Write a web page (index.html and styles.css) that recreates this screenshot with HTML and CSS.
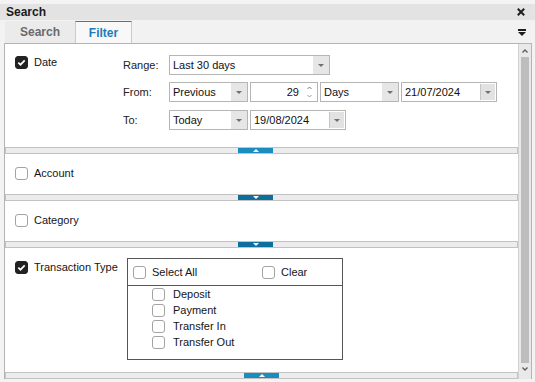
FILE: index.html
```html
<!DOCTYPE html>
<html>
<head>
<meta charset="utf-8">
<link rel="stylesheet" href="styles.css">
</head>
<body>
<div class="titlebar">
  <span class="title">Search</span>
  <svg class="close" viewBox="0 0 8 8"><path d="M0.8 0.8 L7.2 7.2 M7.2 0.8 L0.8 7.2" stroke="#1e1e1e" stroke-width="2" fill="none"/></svg>
</div>
<div class="tabstrip">
  <div class="tab tab-search">Search</div>
  <div class="tab tab-filter">Filter</div>
  <div class="tab-space"></div>
  <svg class="menu" viewBox="0 0 8 7"><rect x="0" y="0" width="8" height="2" fill="#1e1e1e"/><path d="M0 3 L8 3 L4 7 Z" fill="#1e1e1e"/></svg>
</div>
<div class="frame">
  <div class="sections">
    <section class="sec sec-date">
      <div class="lead lead-date">
        <span class="cb checked"><svg viewBox="0 0 13 13"><path d="M3.3 6.6 L5.5 8.7 L9.7 4.3" stroke="#fff" stroke-width="1.7" fill="none"/></svg></span>
        <span class="lead-text">Date</span>
      </div>
      <div class="date-grid">
        <div class="row">
          <span class="lbl">Range:</span>
          <div class="combo w161"><span class="combo-text">Last 30 days</span><span class="combo-btn"><i class="tri"></i></span></div>
        </div>
        <div class="row r2">
          <span class="lbl">From:</span>
          <div class="combo w79"><span class="combo-text">Previous</span><span class="combo-btn"><i class="tri"></i></span></div>
          <div class="spin"><span class="spin-text">29</span><span class="spin-btns"><svg viewBox="0 0 5 12"><path d="M0.5 3 L2.5 1 L4.5 3" stroke="#7a7a7a" fill="none"/><path d="M0.5 9 L2.5 11 L4.5 9" stroke="#9a9a9a" fill="none"/></svg></span></div>
          <div class="combo w79"><span class="combo-text">Days</span><span class="combo-btn"><i class="tri"></i></span></div>
          <div class="combo date w96"><span class="combo-text">21/07/2024</span><span class="combo-btn"><i class="tri"></i></span></div>
        </div>
        <div class="row r3">
          <span class="lbl">To:</span>
          <div class="combo w79"><span class="combo-text">Today</span><span class="combo-btn"><i class="tri"></i></span></div>
          <div class="combo date w96"><span class="combo-text">19/08/2024</span><span class="combo-btn"><i class="tri"></i></span></div>
        </div>
      </div>
    </section>
    <div class="splitter"><span class="handle handle-light"><i class="arr-up"></i></span></div>
    <section class="sec sec-small">
      <div class="lead">
        <span class="cb"></span>
        <span class="lead-text">Account</span>
      </div>
    </section>
    <div class="splitter"><span class="handle"><i class="arr-down"></i></span></div>
    <section class="sec sec-small">
      <div class="lead">
        <span class="cb"></span>
        <span class="lead-text">Category</span>
      </div>
    </section>
    <div class="splitter"><span class="handle"><i class="arr-down"></i></span></div>
    <section class="sec sec-trans">
      <div class="lead lead-trans">
        <span class="cb checked"><svg viewBox="0 0 13 13"><path d="M3.3 6.6 L5.5 8.7 L9.7 4.3" stroke="#fff" stroke-width="1.7" fill="none"/></svg></span>
        <span class="lead-text">Transaction Type</span>
      </div>
      <div class="typebox">
        <div class="typebox-head">
          <label class="opt opt-all"><span class="cb"></span><span>Select All</span></label>
          <label class="opt"><span class="cb"></span><span>Clear</span></label>
        </div>
        <ul class="typelist">
          <li class="item"><span class="cb"></span><span>Deposit</span></li>
          <li class="item"><span class="cb"></span><span>Payment</span></li>
          <li class="item"><span class="cb"></span><span>Transfer In</span></li>
          <li class="item"><span class="cb"></span><span>Transfer Out</span></li>
        </ul>
      </div>
    </section>
    <div class="splitter"><span class="handle handle-light handle-center"><i class="arr-up"></i></span></div>
  </div>
  <div class="scrollbar">
    <div class="sb-btn sb-up"><svg viewBox="0 0 6 4"><path d="M0.5 3.5 L3 1 L5.5 3.5" stroke="#5f5f5f" stroke-width="1.4" fill="none"/></svg></div>
    <div class="sb-track"><div class="sb-thumb"></div></div>
    <div class="sb-btn sb-down"><svg viewBox="0 0 6 4"><path d="M0.5 0.5 L3 3 L5.5 0.5" stroke="#5f5f5f" stroke-width="1.4" fill="none"/></svg></div>
  </div>
</div>
</body>
</html>
```
FILE: styles.css
```css
* { box-sizing: border-box; margin: 0; padding: 0; }
html, body { width: 535px; height: 382px; overflow: hidden; }
body {
  background: #f3f3f3;
  font-family: "Liberation Sans", Arial, sans-serif;
  font-size: 11px;
  color: #151515;
  padding-top: 4px;
}
.titlebar {
  height: 16px;
  background: #e3e3e3;
  display: flex;
  align-items: center;
  padding-left: 6px;
  padding-right: 10px;
}
.title { flex: 1; font-weight: bold; font-size: 12px; color: #1a1a1a; }
.close { width: 8px; height: 8px; }

.tabstrip {
  height: 23px;
  display: flex;
  align-items: flex-end;
  padding-left: 5px;
  padding-right: 9px;
  background: #f2f2f2;
}
.tab {
  height: 22px;
  display: flex;
  align-items: center;
  justify-content: center;
  font-weight: bold;
  font-size: 12px;
}
.tab-search { width: 70px; background: #ebebeb; color: #6a6a6a; }
.tab-filter {
  width: 57px;
  background: #f8f8f8;
  color: #1f7cb8;
  border-top: 1px solid #1f86c6;
  border-left: 1px solid #cbcbcb;
  border-right: 1px solid #cbcbcb;
}
.tab-space { flex: 1; }
.menu { width: 8px; height: 7px; align-self: center; margin-top: 2px; }

.frame {
  margin-left: 4px;
  width: 528px;
  height: 336px;
  border: 1px solid #b4b4b4;
  border-bottom: none;
  display: flex;
  background: #fff;
}
.sections { width: 513px; display: flex; flex-direction: column; }
.sec { background: #fff; display: flex; align-items: flex-start; }
.sec-date { height: 103px; }
.sec-small { height: 40px; }
.sec-trans { height: 124px; }

.lead {
  display: flex;
  align-items: center;
  gap: 6px;
  padding-left: 10px;
  padding-top: 13px;
}
.lead-text { margin-top: -2px; }
.lead-date { width: 118px; padding-top: 12px; }
.lead-trans { width: 122px; }

.cb {
  width: 13px;
  height: 13px;
  border: 1px solid #a3a3a3;
  border-radius: 3px;
  background: #fff;
  flex: none;
  display: block;
}
.cb.checked { background: #222; border-color: #222; }
.cb svg { display: block; width: 13px; height: 13px; margin: -1px; }

.date-grid { display: flex; flex-direction: column; padding-top: 11px; }
.row { display: flex; align-items: center; gap: 2px; height: 20px; }
.r2 { margin-top: 7px; }
.r3 { margin-top: 8px; }
.lbl { width: 44px; color: #222; }

.combo {
  height: 20px;
  display: flex;
  border: 1px solid #b5b5b5;
  background: #fff;
}
.w161 { width: 161px; }
.w79 { width: 79px; }
.w96 { width: 96px; }
.combo-text {
  flex: 1;
  padding-left: 3px;
  line-height: 18px;
  color: #111;
  white-space: nowrap;
}
.combo-btn {
  width: 16px;
  background: #e6e6e6;
  display: flex;
  align-items: center;
  justify-content: center;
}
.date .combo-btn { border-left: 1px solid #c6c6c6; background: #e2e2e2; width: 15px; margin: 1px 1px 1px 0; }
.tri {
  width: 0;
  height: 0;
  border-left: 3.5px solid transparent;
  border-right: 3.5px solid transparent;
  border-top: 3.5px solid #707070;
}
.spin {
  width: 68px;
  height: 20px;
  display: flex;
  border: 1px solid #b5b5b5;
  background: #fff;
}
.spin-text { flex: 1; text-align: right; line-height: 18px; padding-right: 3px; color: #111; }
.spin-btns { width: 15px; display: flex; align-items: center; justify-content: center; }
.spin-btns svg { width: 5px; height: 12px; }

.splitter {
  height: 7px;
  border: 1px solid #c2c2c2;
  background: #ececec;
  display: flex;
}
.handle {
  width: 35px;
  height: 5px;
  margin-left: 232px;
  background: #0d6f9d;
  display: flex;
  align-items: center;
  justify-content: center;
}
.handle-light { background: #1b8cc0; }
.handle-center { margin-left: 238px; }
.arr-up {
  width: 0; height: 0;
  border-left: 3px solid transparent;
  border-right: 3px solid transparent;
  border-bottom: 3px solid #fff;
}
.arr-down {
  width: 0; height: 0;
  border-left: 3px solid transparent;
  border-right: 3px solid transparent;
  border-top: 3px solid #fff;
}

.typebox {
  margin-top: 10px;
  width: 216px;
  height: 102px;
  border: 1px solid #555;
}
.typebox-head {
  height: 27px;
  border-bottom: 1px solid #555;
  display: flex;
  align-items: center;
  padding-left: 5px;
}
.opt { display: flex; align-items: center; gap: 6px; }
.opt-all { width: 129px; }
.typelist { list-style: none; padding-left: 24px; }
.item { height: 16px; display: flex; align-items: center; gap: 8px; }

.scrollbar {
  width: 13px;
  background: #e9e9e9;
  border-left: 1px solid #d2d2d2;
  display: flex;
  flex-direction: column;
}
.sb-btn { display: flex; justify-content: center; align-items: center; }
.sb-btn svg { width: 6px; height: 4px; }
.sb-up { height: 13px; padding-top: 1px; }
.sb-down { height: 16px; padding-bottom: 5px; }
.sb-track { flex: 1; display: flex; justify-content: center; }
.sb-thumb { width: 8px; background: #bdbdbd; }
```
